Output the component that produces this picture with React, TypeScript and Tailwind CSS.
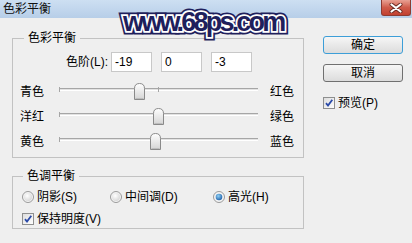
import React from "react";

const FONT = { fontFamily: '"Liberation Sans", "Noto Sans CJK SC", sans-serif' };

function Thumb({ left }: { left: number }) {
  return (
    <svg
      className="absolute top-0"
      style={{ left }}
      width="11"
      height="17"
      viewBox="0 0 11 17"
    >
      <defs>
        <linearGradient id="tg" x1="0" y1="0" x2="0" y2="1">
          <stop offset="0" stopColor="#ffffff" />
          <stop offset="1" stopColor="#d4d4d4" />
        </linearGradient>
      </defs>
      <path
        d="M0.5 16.5 V5.5 Q0.5 0.5 5.5 0.5 Q10.5 0.5 10.5 5.5 V16.5 Z"
        fill="url(#tg)"
        stroke="#8a8a8a"
      />
      <path d="M1.5 15.5 H9.5" stroke="#bdbdbd" />
    </svg>
  );
}

function SliderRow({
  left,
  right,
  value,
  tick,
}: {
  left: string;
  right: string;
  value: number;
  tick?: boolean;
}) {
  const center = 99 + value * 0.99;
  return (
    <div className="flex h-[25px] items-center">
      <div className="w-[39px] text-[12px] leading-[16px]">{left}</div>
      <div className="relative h-[17px] w-[199px]">
        <div className="absolute left-0 right-0 top-[5px] h-[3px] border-t border-t-[#a6a6a6] border-b border-b-white bg-[#e2e2e2]" />
        <div className="absolute left-0 top-[4px] h-[5px] w-px bg-[#a6a6a6]" />
        {tick && (
          <div className="absolute left-[99px] top-[4px] h-[5px] w-px bg-[#a6a6a6]" />
        )}
        <Thumb left={Math.round(center - 5.5)} />
      </div>
      <div className="ml-[12px] text-[12px] leading-[16px]">{right}</div>
    </div>
  );
}

function Radio({ checked }: { checked?: boolean }) {
  return (
    <svg width="12" height="12" viewBox="0 0 12 12" className="shrink-0">
      <defs>
        <radialGradient id={checked ? "rgc" : "rgu"} cx="0.4" cy="0.35" r="0.7">
          <stop offset="0" stopColor={checked ? "#8fd0f5" : "#ffffff"} />
          <stop offset="1" stopColor={checked ? "#1e5fa8" : "#d6d6d6"} />
        </radialGradient>
      </defs>
      <circle cx="6" cy="6" r="5.5" fill="#f4f4f4" stroke="#9a9a9a" />
      {checked ? (
        <circle cx="6" cy="6" r="3.3" fill="url(#rgc)" />
      ) : (
        <circle cx="6" cy="6" r="4" fill="url(#rgu)" />
      )}
    </svg>
  );
}

function Check() {
  return (
    <svg width="12" height="12" viewBox="0 0 12 12" className="shrink-0">
      <defs>
        <linearGradient id="cg" x1="0" y1="0" x2="1" y2="1">
          <stop offset="0" stopColor="#dcdcdc" />
          <stop offset="1" stopColor="#ffffff" />
        </linearGradient>
      </defs>
      <rect x="0.5" y="0.5" width="11" height="11" fill="url(#cg)" stroke="#8e8f8f" />
      <path
        d="M3 6.2 L5 8.6 L9.3 2.8"
        fill="none"
        stroke="#2a4aa8"
        strokeWidth="1.8"
      />
    </svg>
  );
}

function Btn({ label, focus }: { label: string; focus?: boolean }) {
  return (
    <div
      className={`flex h-[18px] w-[80px] items-center justify-center rounded-[3px] border bg-gradient-to-b from-[#f6f6f6] to-[#dcdcdc] text-[12px] leading-[16px] ${
        focus ? "border-[#3c9ed8]" : "border-[#707070]"
      }`}
    >
      {label}
    </div>
  );
}

function Watermark() {
  const base =
    "absolute left-0 top-0 whitespace-nowrap text-[27px] font-bold leading-[30px] tracking-[-2.8px] text-[#1f1f5c]";
  return (
    <div className="pointer-events-none absolute left-[123px] top-[7px]" style={{ fontFamily: '"Liberation Sans", sans-serif' }}>
      <div className="relative h-[30px] w-[170px]">
        <span className={`${base} [-webkit-text-stroke:7px_#1f1f5c]`}>www.68ps.com</span>
        <span className={`${base} [-webkit-text-stroke:3.5px_#ffffff]`}>www.68ps.com</span>
        <span className={base}>www.68ps.com</span>
      </div>
    </div>
  );
}

export default function App() {
  return (
    <div className="relative h-[243px] w-[412px] overflow-hidden bg-[#efefef] text-black" style={FONT}>
      {/* Title bar */}
      <div className="flex h-[18px] items-start justify-between bg-gradient-to-b from-[#cddff2] to-[#b7cee8]">
        <div className="pl-[3px] pt-[1px] text-[12px] leading-[16px] text-[#111]">色彩平衡</div>
        <div className="mr-[1px] flex h-[16px] w-[30px] items-center justify-center rounded-b-[3px] border border-t-0 border-[#8d3b32] bg-gradient-to-b from-[#e8a093] via-[#cf5b4a] to-[#c2402f]">
          <svg width="14" height="10" viewBox="0 0 14 10">
            <path d="M2.5 1.5 L11.5 8.5 M11.5 1.5 L2.5 8.5" stroke="#6a2a22" strokeWidth="4" strokeLinecap="round" />
            <path d="M2.5 1.5 L11.5 8.5 M11.5 1.5 L2.5 8.5" stroke="#ffffff" strokeWidth="2.2" strokeLinecap="round" />
          </svg>
        </div>
      </div>

      {/* Body */}
      <div className="flex pl-[12px]">
        <div className="flex w-[292px] flex-col pt-[12px]">
          <fieldset className="border border-[#c2c2c2] px-[7px] pb-[3px]">
            <legend className="ml-[4px] px-[4px] text-[12px] leading-[16px]">色彩平衡</legend>
            <div className="mt-[6px] flex h-[20px] items-center">
              <div className="w-[91px] pr-[3px] text-right text-[12px] leading-[16px]">色阶(L):</div>
              <div className="flex gap-[9px]">
                {["-19", "0", "-3"].map((v, i) => (
                  <div
                    key={i}
                    className="flex h-[20px] w-[41px] items-center border border-[#c8c8c8] bg-white pl-[3px] text-[12px] leading-[16px]"
                  >
                    {v}
                  </div>
                ))}
              </div>
            </div>
            <div className="mt-[7px]">
              <SliderRow left="青色" right="红色" value={-19} tick />
              <SliderRow left="洋红" right="绿色" value={0} />
              <SliderRow left="黄色" right="蓝色" value={-3} />
            </div>
          </fieldset>

          <fieldset className="mt-[10px] border border-[#c2c2c2] pl-[9px]">
            <legend className="ml-[1px] px-[4px] text-[12px] leading-[16px]">色调平衡</legend>
            <div className="mt-[4px] flex h-[18px] items-center text-[12px] leading-[16px]">
              <div className="flex w-[88px] items-center gap-[3px]">
                <Radio />
                <span>阴影(S)</span>
              </div>
              <div className="flex w-[103px] items-center gap-[3px]">
                <Radio />
                <span>中间调(D)</span>
              </div>
              <div className="flex items-center gap-[3px]">
                <Radio checked />
                <span>高光(H)</span>
              </div>
            </div>
            <div className="mt-[4px] flex h-[18px] items-center gap-[3px] text-[12px] leading-[16px]">
              <Check />
              <span>保持明度(V)</span>
            </div>
          </fieldset>
        </div>

        <div className="ml-[19px] flex flex-col pt-[18px]">
          <Btn label="确定" focus />
          <div className="mt-[10px]">
            <Btn label="取消" />
          </div>
          <div className="mt-[14px] flex h-[14px] items-center gap-[3px] text-[12px] leading-[16px]">
            <Check />
            <span>预览(P)</span>
          </div>
        </div>
      </div>

      <Watermark />
    </div>
  );
}
